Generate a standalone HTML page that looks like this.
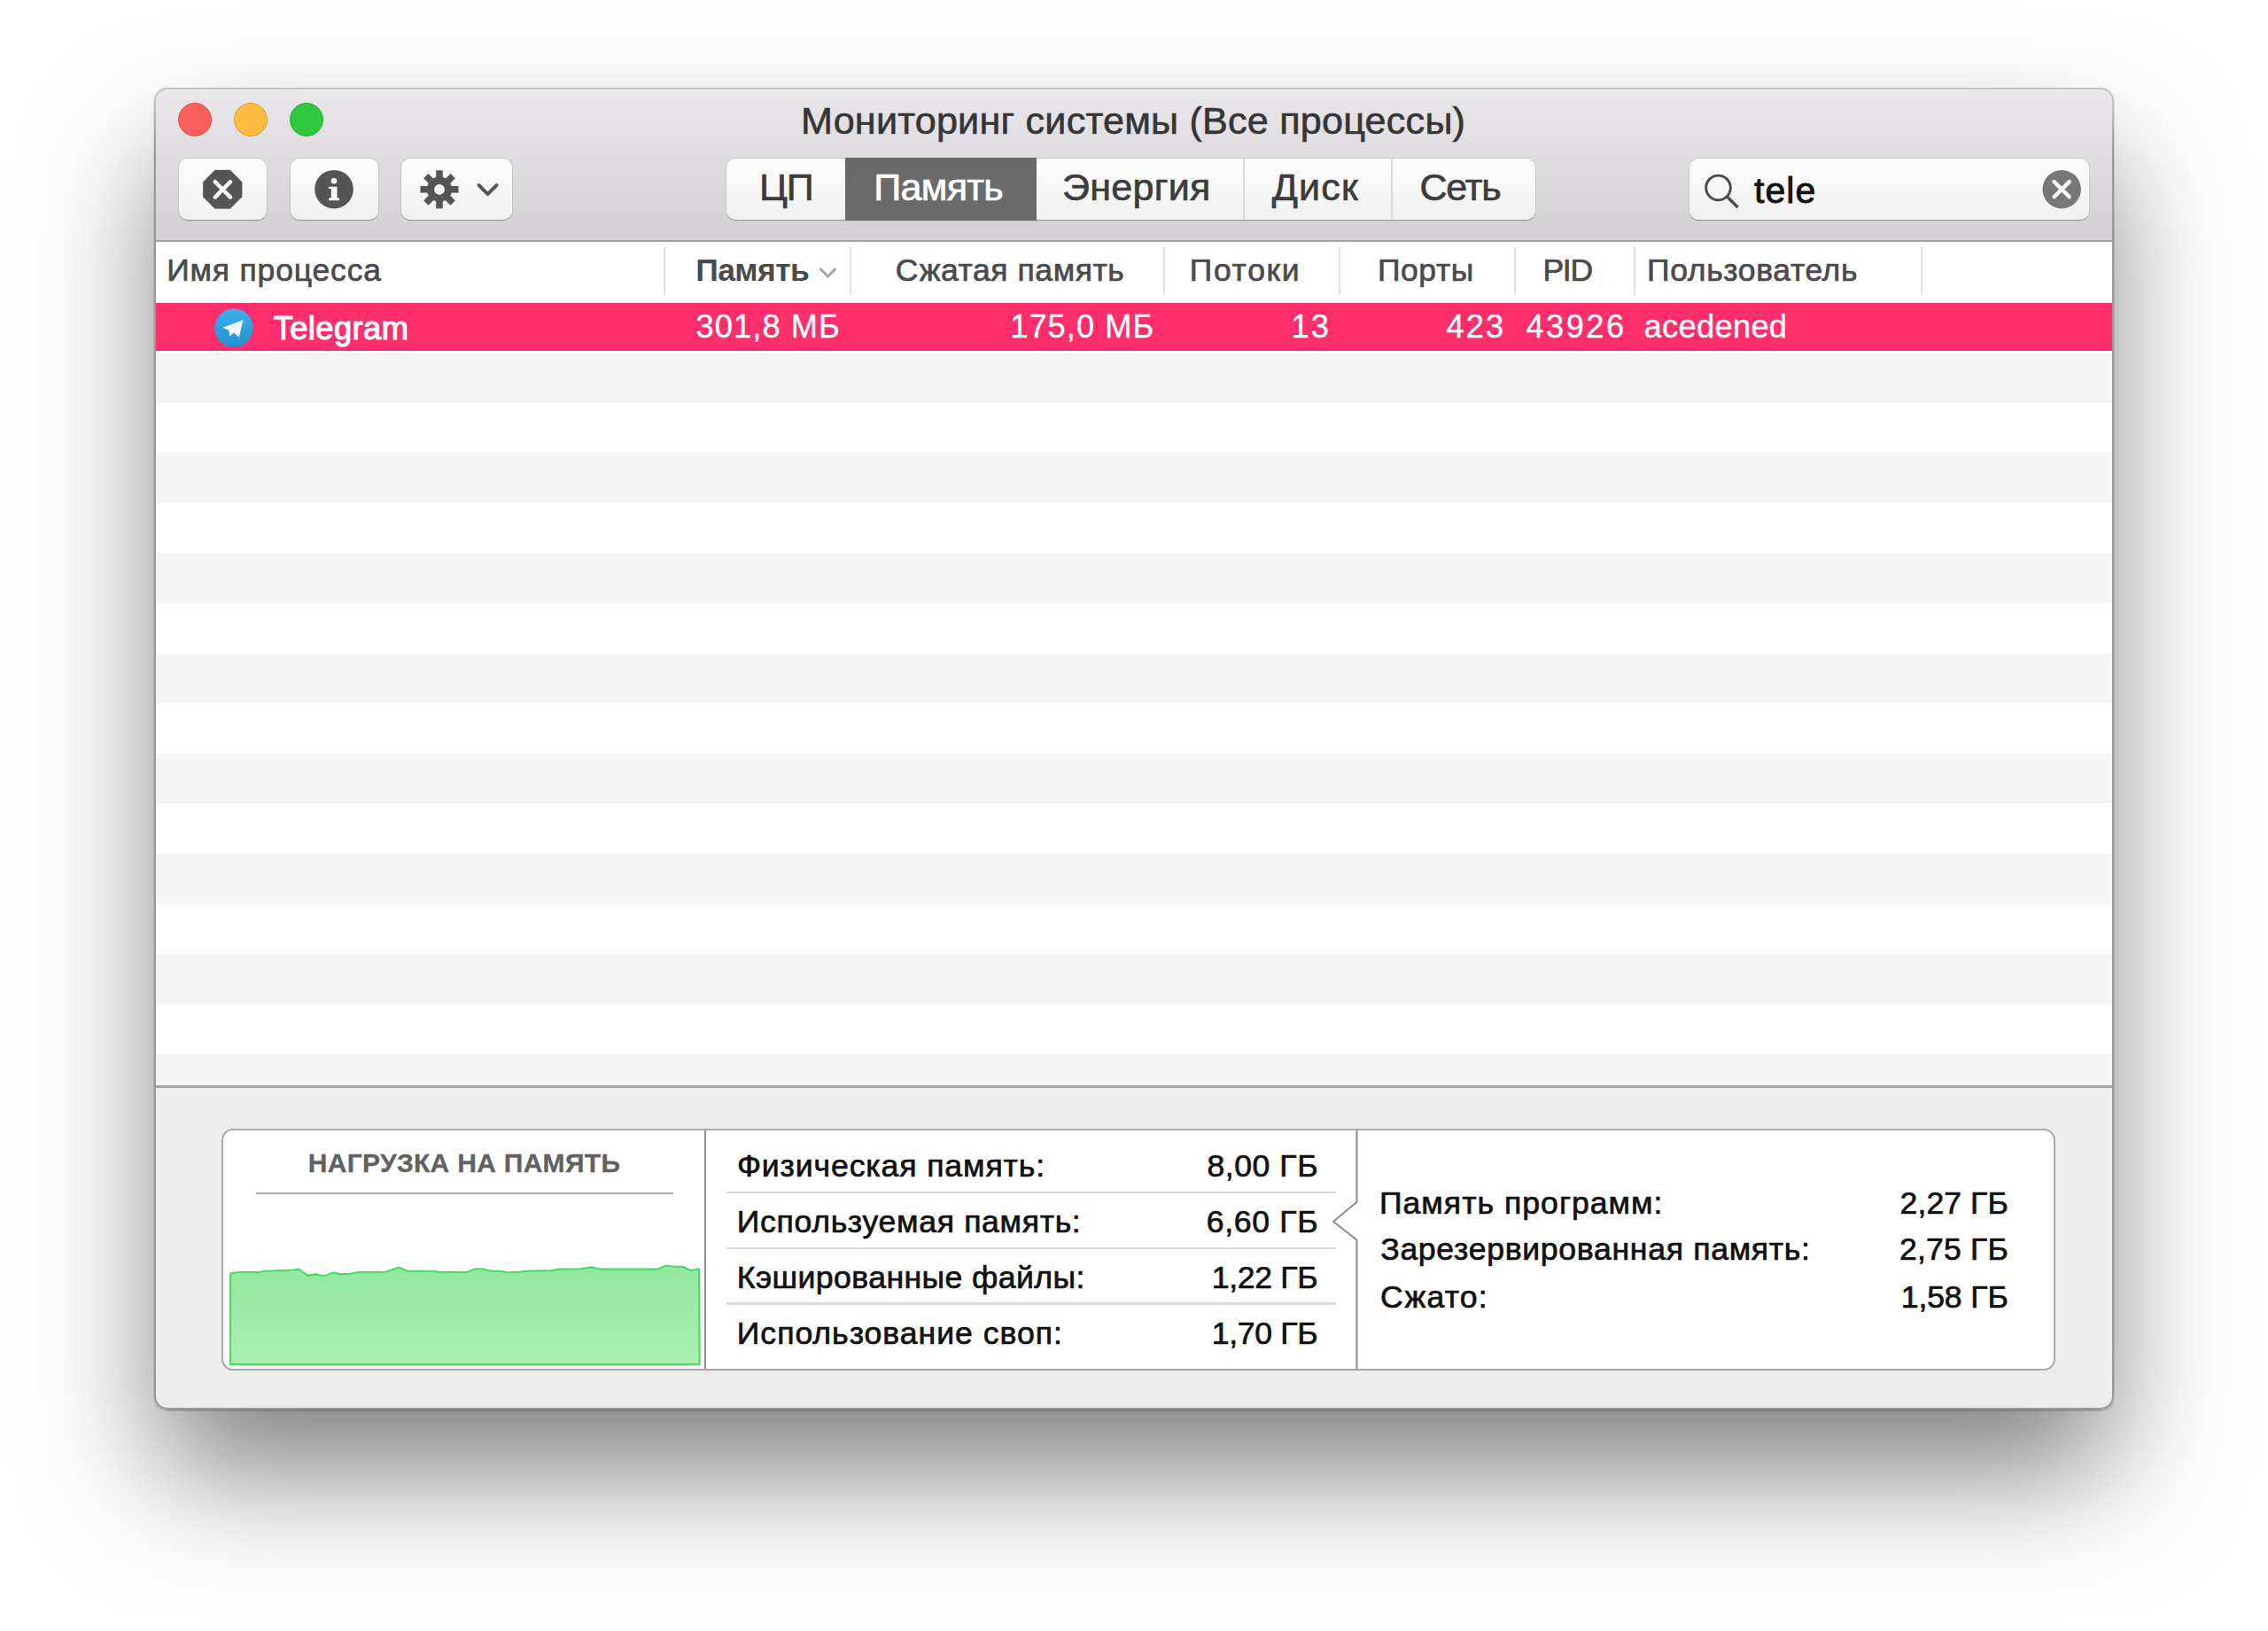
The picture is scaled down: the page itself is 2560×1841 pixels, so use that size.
<!DOCTYPE html>
<html><head><meta charset="utf-8">
<style>
html,body{margin:0;padding:0;}
body{width:2560px;height:1841px;overflow:hidden;background:#fff;position:relative;font-family:"Liberation Sans",sans-serif;}
.a{position:absolute;}
.t{position:absolute;white-space:nowrap;line-height:1;font-family:"Liberation Sans",sans-serif;}
.light{position:absolute;width:38px;height:38px;border-radius:50%;box-sizing:border-box;top:116px;}
.btn{position:absolute;box-sizing:border-box;top:179.3px;height:68.7px;border-radius:10px;background:linear-gradient(#fdfdfd,#f0f0f0);box-shadow:0 0 0 1px rgba(0,0,0,.085),0 1.2px 0.5px rgba(0,0,0,.2);}
.sep{position:absolute;width:2px;top:279px;height:54px;background:#e1e1e1;}
.stripe{position:absolute;left:176px;width:2208px;height:56.5px;background:#f4f4f4;}
.hl{position:absolute;left:819.5px;width:688.3px;height:2.5px;background:#dadada;}
</style></head><body>
<!-- window base + shadow -->
<div class="a" style="left:174px;top:99px;width:2212px;height:1492px;border-radius:15px;background:#ececec;box-shadow:0 76px 140px -6px rgba(0,0,0,.5),0 1px 2px rgba(0,0,0,.35);"></div>
<!-- toolbar -->
<div class="a" style="left:174px;top:99px;width:2212px;height:174px;border-radius:15px 15px 0 0;background:linear-gradient(#f2f0f2 0px,#f2f0f2 3.2px,#e8e6e9 3.8px,#d2d0d3 172px);"></div>
<div class="a" style="left:174px;top:271.2px;width:2212px;height:2px;background:#a2a2a2;"></div>
<!-- table -->
<div class="a" style="left:176px;top:273.2px;width:2208px;height:951.8px;background:#fff;"></div>
<div class="stripe" style="top:398.0px;height:56.6px"></div><div class="stripe" style="top:511.2px;height:56.6px"></div><div class="stripe" style="top:624.4px;height:56.6px"></div><div class="stripe" style="top:737.6px;height:56.6px"></div><div class="stripe" style="top:850.8px;height:56.6px"></div><div class="stripe" style="top:964.0px;height:56.6px"></div><div class="stripe" style="top:1077.2px;height:56.6px"></div>
<div class="stripe" style="top:1190.4px;height:34.6px"></div>
<div class="a" style="left:176px;top:342px;width:2208px;height:53.5px;background:#fe2e6c;"></div>
<div class="a" style="left:176px;top:1225px;width:2208px;height:3px;background:#a4a4a4;"></div>
<!-- header separators -->
<div class="sep" style="left:748.5px"></div><div class="sep" style="left:958.7px"></div><div class="sep" style="left:1313px"></div><div class="sep" style="left:1511.2px"></div><div class="sep" style="left:1709.4px"></div><div class="sep" style="left:1843.9px"></div><div class="sep" style="left:2167.6px"></div>
<svg class="a" style="left:920px;top:298px" width="30" height="20"><path d="M5.5,5 L14.5,14 L23.5,5" fill="none" stroke="#a3a3a3" stroke-width="3"/></svg>
<!-- window border overlay -->
<div class="a" style="left:174px;top:99px;width:2212px;height:1492px;box-sizing:border-box;border-radius:15px;border:2px solid #c6c4c7;"></div>
<div class="a" style="left:174px;top:99px;width:2212px;height:1492px;box-sizing:border-box;border-radius:15px;border:2px solid #9a9a9a;border-top-color:transparent;-webkit-mask-image:linear-gradient(transparent 0px,transparent 14px,#000 70px);"></div>

<!-- traffic lights -->
<div class="light" style="left:201px;background:#fd605b;border:1.5px solid #cf4d49;"></div>
<div class="light" style="left:264px;background:#febb3f;border:1.5px solid #d49c33;"></div>
<div class="light" style="left:326.5px;background:#2fc940;border:1.5px solid #24a534;"></div>
<!-- buttons -->
<div class="btn" style="left:201.7px;width:99.5px;"></div>
<div class="btn" style="left:328px;width:99px;"></div>
<div class="btn" style="left:453px;width:124.5px;"></div>
<!-- segmented -->
<div class="btn" style="left:820px;width:913px;"></div>
<div class="a" style="left:954px;top:178.3px;width:216px;height:70.5px;background:#6a6a6a;"></div>
<div class="a" style="left:1403px;top:179.3px;width:2px;height:68.7px;background:#d9d9d9;"></div>
<div class="a" style="left:1569.7px;top:179.3px;width:2px;height:68.7px;background:#d9d9d9;"></div>
<!-- search -->
<div class="btn" style="left:1907px;width:451px;"></div>
<!-- bottom panel box -->
<div class="a" style="left:249.5px;top:1273.5px;width:2070px;height:273.5px;box-sizing:border-box;border-radius:13px;background:#fff;border:2.5px solid #a8a8a8;"></div>
<div class="a" style="left:289px;top:1345.7px;width:471px;height:2px;background:#acacac;"></div>
<svg class="a" style="left:250px;top:1420px" width="560" height="130" viewBox="0 0 560 130">
<defs><linearGradient id="gg" x1="0" y1="0" x2="0" y2="1"><stop offset="0" stop-color="#92e89e"/><stop offset="1" stop-color="#aaefb4"/></linearGradient></defs>
<path d="M10.0,17.2 L19.8,16.0 L42.0,16.0 L49.4,14.7 L80.0,13.5 L87.7,12.8 L97.5,19.6 L106.0,18.4 L116.0,20.2 L126.0,16.5 L135.8,18.4 L145.7,17.8 L154.3,16.0 L185.0,15.7 L200.6,10.4 L210.0,14.7 L240.7,14.7 L245.7,16.0 L277.4,15.9 L286.0,12.2 L294.7,12.2 L304.6,14.7 L315.7,14.7 L323.0,16.2 L335.4,15.9 L344.0,14.7 L372.5,14.0 L381.0,12.6 L405.8,12.2 L417.0,10.4 L428.0,12.6 L492.2,12.6 L502.0,8.5 L510.7,9.8 L520.6,9.8 L529.3,14.0 L539.1,12.2 L539.6,120.0 L10.0,120.0 Z" fill="url(#gg)" stroke="#48da64" stroke-width="2.1" stroke-linejoin="round"/>
</svg>
<div class="a" style="left:794.5px;top:1276px;width:2px;height:269px;background:#8e8e8e;"></div>
<div class="hl" style="top:1344.8px"></div>
<div class="hl" style="top:1407.6px"></div>
<div class="hl" style="top:1470.3px"></div>
<svg class="a" style="left:1495px;top:1276px" width="40" height="270" viewBox="0 0 40 270">
<path d="M36.5,0 L36.5,80.7 L10,102.9 L36.5,123.6 L36.5,270" fill="none" stroke="#8e8e8e" stroke-width="2"/>
</svg>
<!-- icons placeholder -->
<!-- stop octagon -->
<svg class="a" style="left:225px;top:188px" width="52" height="52" viewBox="225 188 52 52">
<polygon points="242.6,191.9 259.8,191.9 273.2,205.4 273.2,222.2 259.8,235.6 242.6,235.6 229.2,222.2 229.2,205.4" fill="#555555" stroke="#555555" stroke-width="0.3" stroke-linejoin="round"/>
<path d="M242.8,205.2 L260,222.6 M260,205.2 L242.8,222.6" stroke="#fafafa" stroke-width="4.4" stroke-linecap="round"/>
</svg>
<!-- info -->
<svg class="a" style="left:350px;top:188px" width="54" height="52" viewBox="350 188 54 52">
<circle cx="377" cy="213.7" r="21.8" fill="#555555"/>
<circle cx="377" cy="204.2" r="3.3" fill="#fafafa"/>
<path d="M371,210.7 L380.5,210.7 L380.5,223.4 L383,223.4 L383,226.2 L371,226.2 L371,223.4 L373.8,223.4 L373.8,213.1 L371,213.1 Z" fill="#fafafa"/>
</svg>
<!-- gear -->
<svg class="a" style="left:470px;top:188px" width="54" height="52" viewBox="-26 -25.8 54 52">
<g fill="#555555">
<rect x="-3.8" y="-21.5" width="7.6" height="43"/>
<rect x="-3.8" y="-21.5" width="7.6" height="43" transform="rotate(45)"/>
<rect x="-3.8" y="-21.5" width="7.6" height="43" transform="rotate(90)"/>
<rect x="-3.8" y="-21.5" width="7.6" height="43" transform="rotate(135)"/>
<circle r="14.2"/>
</g>
<circle r="5.9" fill="#f7f7f7"/>
</svg>
<svg class="a" style="left:530px;top:196px" width="40" height="36" viewBox="530 196 40 36">
<path d="M540.6,209.2 L550.5,219.2 L560.5,209.2" fill="none" stroke="#555555" stroke-width="4" stroke-linecap="round" stroke-linejoin="round"/>
</svg>
<!-- search magnifier -->
<svg class="a" style="left:1915px;top:190px" width="60" height="52" viewBox="1915 190 60 52">
<circle cx="1939.5" cy="211.9" r="13.8" fill="none" stroke="#4b4b4b" stroke-width="2.9"/>
<path d="M1950,222.5 L1961.5,234" stroke="#4b4b4b" stroke-width="3.3" stroke-linecap="butt"/>
</svg>
<!-- clear -->
<svg class="a" style="left:2296px;top:186px" width="60" height="56" viewBox="2296 186 60 56">
<circle cx="2327.2" cy="213.7" r="21.7" fill="#777777"/>
<path d="M2318.6,205.1 L2335.8,222.3 M2335.8,205.1 L2318.6,222.3" stroke="#fafafa" stroke-width="4.4" stroke-linecap="round"/>
</svg>
<!-- telegram -->
<svg class="a" style="left:236px;top:344px" width="56" height="52" viewBox="236 344 56 52">
<defs><linearGradient id="tg" x1="0" y1="0" x2="0" y2="1"><stop offset="0" stop-color="#3eb0ea"/><stop offset="1" stop-color="#2590d0"/></linearGradient></defs>
<circle cx="264" cy="370.1" r="21.7" fill="url(#tg)"/>
<polygon points="274.3,361.2 251,369.8 258.3,372.8 259.6,379.7 263.6,375.6 269.8,380.4" fill="#f4fbff"/>
<path d="M258.3,372.8 L274.3,361.2 L263.6,375.6" fill="none" stroke="#cfe6f4" stroke-width="0.8"/>
</svg>

<!-- texts -->
<div class="t" style="left:904.00px;top:115.00px;font-size:43.19px;letter-spacing:0.188px;color:#353535;-webkit-text-stroke:0.6px #353535;">Мониторинг системы (Все процессы)</div>
<div class="t" style="left:857.00px;top:190.00px;font-size:43.04px;letter-spacing:-1.0px;color:#3c3c3c;-webkit-text-stroke:0.7px #3c3c3c;">ЦП</div>
<div class="t" style="left:986.20px;top:190.00px;font-size:43.04px;letter-spacing:-0.66px;color:#ffffff;-webkit-text-stroke:0.7px #ffffff;">Память</div>
<div class="t" style="left:1199.00px;top:190.00px;font-size:43.04px;letter-spacing:0.283px;color:#3c3c3c;-webkit-text-stroke:0.7px #3c3c3c;">Энергия</div>
<div class="t" style="left:1435.70px;top:190.00px;font-size:43.04px;letter-spacing:1.167px;color:#3c3c3c;-webkit-text-stroke:0.7px #3c3c3c;">Диск</div>
<div class="t" style="left:1602.40px;top:190.00px;font-size:43.04px;letter-spacing:-1.167px;color:#3c3c3c;-webkit-text-stroke:0.7px #3c3c3c;">Сеть</div>
<div class="t" style="left:1980.00px;top:195.00px;font-size:41.15px;letter-spacing:1.0px;color:#111111;-webkit-text-stroke:0.9px #111111;">tele</div>
<div class="t" style="left:188.20px;top:288.00px;font-size:35.51px;letter-spacing:0.836px;color:#4a4a4a;-webkit-text-stroke:0.7px #4a4a4a;">Имя процесса</div>
<div class="t" style="left:785.20px;top:288.00px;font-size:35.51px;letter-spacing:-0.56px;color:#4a4a4a;font-weight:700;-webkit-text-stroke:0.01px #4a4a4a;">Память</div>
<div class="t" style="left:1010.70px;top:288.00px;font-size:35.51px;letter-spacing:0.575px;color:#4a4a4a;-webkit-text-stroke:0.7px #4a4a4a;">Сжатая память</div>
<div class="t" style="left:1342.70px;top:288.00px;font-size:35.51px;letter-spacing:1.7px;color:#4a4a4a;-webkit-text-stroke:0.7px #4a4a4a;">Потоки</div>
<div class="t" style="left:1554.90px;top:288.00px;font-size:35.51px;letter-spacing:0.6px;color:#4a4a4a;-webkit-text-stroke:0.7px #4a4a4a;">Порты</div>
<div class="t" style="left:1741.40px;top:288.00px;font-size:35.51px;letter-spacing:-1.25px;color:#4a4a4a;-webkit-text-stroke:0.7px #4a4a4a;">PID</div>
<div class="t" style="left:1859.00px;top:288.00px;font-size:35.51px;letter-spacing:0.645px;color:#4a4a4a;-webkit-text-stroke:0.7px #4a4a4a;">Пользователь</div>
<div class="t" style="left:308.70px;top:353.00px;font-size:36.23px;letter-spacing:0.457px;color:#ffffff;-webkit-text-stroke:1.2px #ffffff;">Telegram</div>
<div class="t" style="left:785.50px;top:351.00px;font-size:36.23px;letter-spacing:1.1px;color:#ffffff;-webkit-text-stroke:0.35px #ffffff;">301,8 МБ</div>
<div class="t" style="left:1140.20px;top:351.00px;font-size:36.23px;letter-spacing:1.057px;color:#ffffff;-webkit-text-stroke:0.35px #ffffff;">175,0 МБ</div>
<div class="t" style="left:1457.40px;top:351.00px;font-size:36.23px;letter-spacing:2.3px;color:#ffffff;-webkit-text-stroke:0.35px #ffffff;">13</div>
<div class="t" style="left:1632.50px;top:351.00px;font-size:36.23px;letter-spacing:2.1px;color:#ffffff;-webkit-text-stroke:0.35px #ffffff;">423</div>
<div class="t" style="left:1722.40px;top:351.00px;font-size:36.23px;letter-spacing:2.5px;color:#ffffff;-webkit-text-stroke:0.35px #ffffff;">43926</div>
<div class="t" style="left:1855.50px;top:351.00px;font-size:36.23px;letter-spacing:0.343px;color:#ffffff;-webkit-text-stroke:0.35px #ffffff;">acedened</div>
<div class="t" style="left:347.80px;top:1298.00px;font-size:30.0px;letter-spacing:0.3px;color:#616161;font-weight:700;-webkit-text-stroke:0.3px #616161;">НАГРУЗКА НА ПАМЯТЬ</div>
<div class="t" style="left:831.90px;top:1299.00px;font-size:35.65px;letter-spacing:0.859px;color:#111111;-webkit-text-stroke:0.7px #111111;">Физическая память:</div>
<div class="t" style="left:831.80px;top:1362.00px;font-size:35.65px;letter-spacing:0.653px;color:#111111;-webkit-text-stroke:0.7px #111111;">Используемая память:</div>
<div class="t" style="left:831.80px;top:1425.00px;font-size:35.65px;letter-spacing:0.394px;color:#111111;-webkit-text-stroke:0.7px #111111;">Кэшированные файлы:</div>
<div class="t" style="left:831.80px;top:1488.00px;font-size:35.65px;letter-spacing:0.95px;color:#111111;-webkit-text-stroke:0.7px #111111;">Использование своп:</div>
<div class="t" style="left:1362.50px;top:1299.00px;font-size:35.65px;letter-spacing:0.517px;color:#111111;-webkit-text-stroke:0.7px #111111;">8,00 ГБ</div>
<div class="t" style="left:1361.80px;top:1362.00px;font-size:35.65px;letter-spacing:0.633px;color:#111111;-webkit-text-stroke:0.7px #111111;">6,60 ГБ</div>
<div class="t" style="left:1367.70px;top:1425.00px;font-size:35.65px;letter-spacing:-0.35px;color:#111111;-webkit-text-stroke:0.7px #111111;">1,22 ГБ</div>
<div class="t" style="left:1367.70px;top:1488.00px;font-size:35.65px;letter-spacing:-0.35px;color:#111111;-webkit-text-stroke:0.7px #111111;">1,70 ГБ</div>
<div class="t" style="left:1556.90px;top:1341.00px;font-size:35.65px;letter-spacing:1.007px;color:#111111;-webkit-text-stroke:0.7px #111111;">Память программ:</div>
<div class="t" style="left:1558.20px;top:1393.00px;font-size:35.65px;letter-spacing:0.667px;color:#111111;-webkit-text-stroke:0.7px #111111;">Зарезервированная память:</div>
<div class="t" style="left:1557.90px;top:1447.00px;font-size:35.65px;letter-spacing:1.16px;color:#111111;-webkit-text-stroke:0.7px #111111;">Сжато:</div>
<div class="t" style="left:2144.60px;top:1341.00px;font-size:35.65px;letter-spacing:0.05px;color:#111111;-webkit-text-stroke:0.7px #111111;">2,27 ГБ</div>
<div class="t" style="left:2144.00px;top:1393.00px;font-size:35.65px;letter-spacing:0.15px;color:#111111;-webkit-text-stroke:0.7px #111111;">2,75 ГБ</div>
<div class="t" style="left:2145.70px;top:1447.00px;font-size:35.65px;letter-spacing:-0.133px;color:#111111;-webkit-text-stroke:0.7px #111111;">1,58 ГБ</div>
</body></html>
